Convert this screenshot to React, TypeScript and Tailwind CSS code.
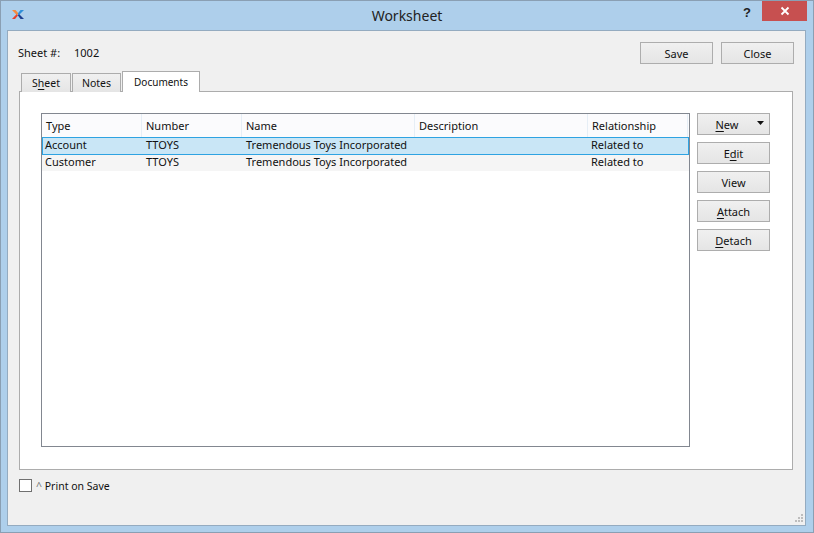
import React from 'react';

const columns = [
  { label: 'Type', width: 'w-[100px]' },
  { label: 'Number', width: 'w-[100px]' },
  { label: 'Name', width: 'w-[173px]' },
  { label: 'Description', width: 'w-[173px]' },
  { label: 'Relationship', width: 'w-[100px]' },
];

const rows = [
  { type: 'Account', number: 'TTOYS', name: 'Tremendous Toys Incorporated', description: '', relationship: 'Related to' },
  { type: 'Customer', number: 'TTOYS', name: 'Tremendous Toys Incorporated', description: '', relationship: 'Related to' },
];

const Button: React.FC<{ className?: string; children: React.ReactNode }> = ({ className = '', children }) => (
  <button className={`relative h-[22px] w-[73px] pt-[1px] flex items-center justify-center border border-[#adadad] bg-gradient-to-b from-[#f0f0f0] to-[#e5e5e5] text-[11px] leading-none text-[#111] ${className}`}>
    {children}
  </button>
);

const Key: React.FC<{ children: React.ReactNode }> = ({ children }) => <span className="underline underline-offset-2">{children}</span>;

const XLogo = () => (
  <svg width="12" height="9" viewBox="0 0 12 9">
    <path d="M0 0h3.500l3 3.500L5 5.200z" fill="#f58a3c" />
    <path d="M4.500 4.300 6 5.500 3 9H0z" fill="#e8402a" />
    <path d="M8.500 0H12L7 5 5.800 3.500z" fill="#2f8fd8" />
    <path d="M5.800 5.200 7 4l5 5H8.500z" fill="#1d3f8f" />
  </svg>
);

const App: React.FC = () => {
  return (
    <div className="w-[814px] h-[533px] flex flex-col bg-[#aecfeb] border border-[#8a9fb3] font-['Noto_Sans','Open_Sans',sans-serif] text-[11px] text-[#111] overflow-hidden">
      {/* title bar */}
      <div className="h-[29px] shrink-0 flex items-start relative">
        <div className="absolute left-[11px] top-[9px] flex"><XLogo /></div>
        <div className="flex-1 text-center text-[14px] leading-[29px] text-[#222] pl-[51px]">Worksheet</div>
        <div className="absolute right-[62px] top-[2px] text-[13px] font-bold text-[#222] font-['Liberation_Sans',sans-serif]">?</div>
        <div className="mr-[6px] w-[45px] h-[20px] bg-[#c75050] flex items-center justify-center">
          <svg width="10" height="10" viewBox="0 0 10 10"><path d="M1.500 1.500l7 7M8.500 1.500l-7 7" stroke="#fff" strokeWidth="1.800" /></svg>
        </div>
      </div>

      {/* client area */}
      <div className="relative mx-[6px] h-[496px] w-[799px] bg-[#f0f0f0] border border-[#94abc0] flex flex-col pl-[10px] pr-[11px] pt-[11px]">
        <div className="flex items-center justify-between h-[22px]">
          <div className="flex items-center pt-[1px]">
            <span className="w-[56px]">Sheet #:</span>
            <span>1002</span>
          </div>
          <div className="flex gap-[8px]">
            <Button>Save</Button>
            <Button>Close</Button>
          </div>
        </div>

        {/* tabs */}
        <div className="mt-[6px] ml-[3px] flex items-end h-[21px] gap-[1px] relative z-10">
          <div className="w-[50px] h-[19px] -mb-[1px] pt-[1px] flex items-center justify-center border border-b-0 border-[#acacac] bg-gradient-to-b from-[#f0f0f0] to-[#e5e5e5] text-[10.500px]">S<Key>h</Key>eet</div>
          <div className="w-[49px] h-[19px] -mb-[1px] pt-[1px] flex items-center justify-center border border-b-0 border-[#acacac] bg-gradient-to-b from-[#f0f0f0] to-[#e5e5e5] text-[10.500px]">Notes</div>
          <div className="w-[78px] h-[21px] -mb-[1px] flex items-center justify-center border border-b-0 border-[#acacac] bg-white text-[10px]">Documents</div>
        </div>

        {/* tab pane */}
        <div className="ml-[1px] w-[774px] h-[379px] bg-white border border-[#acacac] flex items-start pl-[21px] pt-[21px]">
          <div className="w-[649px] h-[334px] border border-[#828790] bg-white shrink-0">
            <div className="flex h-[23px] bg-[#fbfbfd]">
              {columns.map((c) => (
                <div key={c.label} className={`${c.width} border-r border-[#e6eef6] pl-[4px] leading-[23px]`}>{c.label}</div>
              ))}
            </div>
            <div className="flex h-[18px] bg-[#c9e6f6] border border-[#2ea3e2] leading-[13px]">
              <div className="w-[99px] pl-[2px]">{rows[0].type}</div>
              <div className="w-[100px] pl-[4px]">{rows[0].number}</div>
              <div className="w-[173px] pl-[4px] whitespace-nowrap">{rows[0].name}</div>
              <div className="w-[173px] pl-[4px]">{rows[0].description}</div>
              <div className="w-[100px] pl-[3px]">{rows[0].relationship}</div>
            </div>
            <div className="flex h-[16px] bg-[#f5f5f5] leading-[13px]">
              <div className="w-[100px] pl-[3px]">{rows[1].type}</div>
              <div className="w-[100px] pl-[4px]">{rows[1].number}</div>
              <div className="w-[173px] pl-[4px] whitespace-nowrap">{rows[1].name}</div>
              <div className="w-[173px] pl-[4px]">{rows[1].description}</div>
              <div className="w-[100px] pl-[3px]">{rows[1].relationship}</div>
            </div>
          </div>

          <div className="ml-[7px] flex flex-col gap-[7px]">
            <Button>
              <span className="mr-[13px]"><Key>N</Key>ew</span>
              <svg className="absolute right-[5px] top-[7px]" width="7" height="4" viewBox="0 0 7 4"><path d="M0 0h7L3.500 4z" fill="#111" /></svg>
            </Button>
            <Button><span>E<Key>d</Key>it</span></Button>
            <Button>View</Button>
            <Button><span><Key>A</Key>ttach</span></Button>
            <Button><span><Key>D</Key>etach</span></Button>
          </div>
        </div>

        {/* footer */}
        <div className="mt-[7px] ml-[1px] flex items-center gap-[4px]">
          <div className="w-[13px] h-[13px] border border-[#707070] bg-white" />
          <span className="pt-[2px] text-[10.500px]">
            <span className="text-[#777]">^</span> Print on Save
          </span>
        </div>

        {/* size grip */}
        <svg className="absolute right-[1px] bottom-[1px]" width="10" height="10" viewBox="0 0 10 10" fill="#bdbdbd">
          <rect x="7" y="0" width="2" height="2" />
          <rect x="4" y="3" width="2" height="2" />
          <rect x="7" y="3" width="2" height="2" />
          <rect x="1" y="6" width="2" height="2" />
          <rect x="4" y="6" width="2" height="2" />
          <rect x="7" y="6" width="2" height="2" />
        </svg>
      </div>
    </div>
  );
};

export default App;
